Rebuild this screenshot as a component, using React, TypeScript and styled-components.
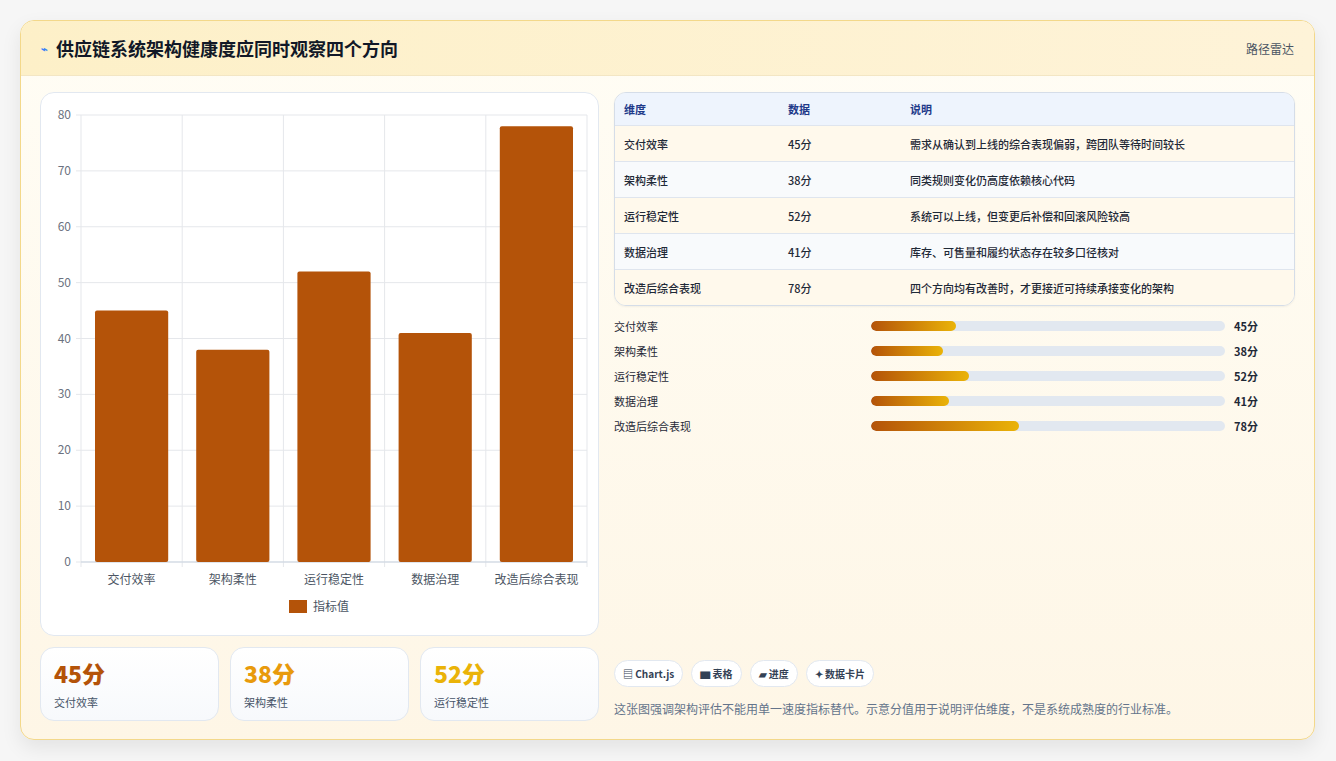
import React from "react";
import styled, { createGlobalStyle } from "styled-components";

const Global = createGlobalStyle`
  html, body { margin: 0; background: #f6f6f6; }
  body { font-family: "Noto Sans CJK SC", "Noto Sans", sans-serif; color: #1f2937; }
`;

const data = [
  { name: "交付效率", v: 45, desc: "需求从确认到上线的综合表现偏弱，跨团队等待时间较长" },
  { name: "架构柔性", v: 38, desc: "同类规则变化仍高度依赖核心代码" },
  { name: "运行稳定性", v: 52, desc: "系统可以上线，但变更后补偿和回滚风险较高" },
  { name: "数据治理", v: 41, desc: "库存、可售量和履约状态存在较多口径核对" },
  { name: "改造后综合表现", v: 78, desc: "四个方向均有改善时，才更接近可持续承接变化的架构" },
];

const Page = styled.div`padding: 20px 20px 20px 20px;`;
const Card = styled.div`
  width: 1295px; height: 720px; box-sizing: border-box;
  border: 1px solid #f3d88a; border-radius: 14px; overflow: hidden;
  background: linear-gradient(180deg, #fffdf5, #fef6e6);
  box-shadow: 0 8px 20px rgba(0,0,0,0.08);
  display: flex; flex-direction: column;
`;
const Header = styled.div`
  height: 56px; box-sizing: border-box; padding: 0 20px;
  display: flex; align-items: center; justify-content: space-between;
  background: linear-gradient(90deg, #fdf0c8, #fef3d8); border-bottom: 1px solid #f3e6c4;
`;
const Title = styled.div`font-size: 18px; font-weight: 700; color: #111827; display: flex; align-items: center; gap: 8px;`;
const Link = styled.div`font-size: 12px; color: #4b5563;`;
const Body = styled.div`flex: 1; display: grid; grid-template-columns: 559px 1fr; gap: 15px; padding: 16px 19px 18px 19px;`;
const Col = styled.div`display: flex; flex-direction: column; gap: 11px;`;
const ChartCard = styled.div`
  height: 544px; box-sizing: border-box; background: #fff; border: 1px solid #e2e8f0; border-radius: 14px;
`;
const Stats = styled.div`display: grid; grid-template-columns: repeat(3, 1fr); gap: 11px;`;
const Stat = styled.div`
  height: 74px; box-sizing: border-box; border: 1px solid #e2e8f0; border-radius: 14px;
  background: linear-gradient(180deg, #fff, #f7f9fc); padding: 10px 13px;
`;
const StatVal = styled.div<{ c: string }>`font-size: 23px; font-weight: 800; color: ${p => p.c}; line-height: 30px;`;
const StatLbl = styled.div`font-size: 11px; color: #475569; margin-top: 6px;`;
const Table = styled.div`border: 1px solid #d5dde8; border-radius: 12px; overflow: hidden; box-shadow: 0 1px 2px rgba(0,0,0,0.05);`;
const Row = styled.div<{ head?: boolean; alt?: boolean }>`
  display: grid; grid-template-columns: 164px 122px 1fr; padding: 0 9px;
  height: ${p => (p.head ? 32 : 35)}px; align-items: center; font-size: 11px;
  font-weight: ${p => (p.head ? 700 : 500)};
  color: ${p => (p.head ? "#1e3a8a" : "#1f2937")};
  background: ${p => (p.head ? "#eef4fd" : p.alt ? "#f8fafc" : "#fff9ec")};
  border-top: ${p => (p.head ? "none" : "1px solid #dfe5ee")};
`;
const Bars = styled.div`display: flex; flex-direction: column; gap: 9px; margin-top: 12px;`;
const BarRow = styled.div`display: grid; grid-template-columns: 257px 354px 1fr; gap: 0; align-items: center; font-size: 11px; height: 16px;`;
const Track = styled.div`height: 10px; background: #e2e8f0; border-radius: 5px; overflow: hidden;`;
const Fill = styled.div`height: 100%; border-radius: 5px; background: linear-gradient(90deg, #b45309, #eab308);`;
const Val = styled.div`font-weight: 700; padding-left: 9px;`;
const Spacer = styled.div`flex: 1;`;
const Chips = styled.div`display: flex; gap: 8px;`;
const Chip = styled.div`
  height: 27px; box-sizing: border-box; padding: 0 8px; border: 1px solid #e2e8f0; border-radius: 14px;
  background: #fff; font-size: 10px; font-weight: 600; color: #334155; display: flex; align-items: center; gap: 3px;
`;
const Note = styled.div`font-size: 12px; color: #64748b; margin-top: 13px; margin-bottom: 4px;`;

function Chart() {
  const x0 = 40, x1 = 546, y0 = 22, y1 = 469;
  const h = y1 - y0;
  const step = (x1 - x0) / 5;
  return (
    <svg width="557" height="542" style={{ display: "block" }} fontFamily="'Noto Sans CJK SC', sans-serif">
      {[0, 10, 20, 30, 40, 50, 60, 70, 80].map(t => {
        const y = y1 - (t / 80) * h;
        return (
          <g key={t}>
            <line x1={x0 - 5} x2={x1} y1={y} y2={y} stroke="#e5e7eb" />
            <text x={x0 - 10} y={y + 4} fontSize="12" fill="#6b7280" textAnchor="end">{t}</text>
          </g>
        );
      })}
      {[0, 1, 2, 3, 4, 5].map(i => (
        <line key={i} x1={x0 + i * step} x2={x0 + i * step} y1={y0} y2={y1 + 5} stroke="#e5e7eb" />
      ))}
      <line x1={x0} x2={x1} y1={y1} y2={y1} stroke="#cbd5e1" />
      {data.map((d, i) => {
        const bh = (d.v / 80) * h;
        return (
          <g key={d.name}>
            <rect x={x0 + i * step + 14} y={y1 - bh} width={step - 28} height={bh} rx="2" fill="#b45309" />
            <text x={x0 + i * step + step / 2} y={y1 + 22} fontSize="12" fill="#4b5563" textAnchor="middle">{d.name}</text>
          </g>
        );
      })}
      <rect x="248" y="507" width="18" height="13" fill="#b45309" />
      <text x="272" y="518" fontSize="12" fill="#4b5563">指标值</text>
    </svg>
  );
}

export default function App() {
  return (
    <Page>
      <Global />
      <Card>
        <Header>
          <Title><span style={{ color: "#3b82f6", fontSize: 11 }}>⌁</span>供应链系统架构健康度应同时观察四个方向</Title>
          <Link>路径雷达</Link>
        </Header>
        <Body>
          <Col>
            <ChartCard><Chart /></ChartCard>
            <Stats>
              <Stat><StatVal c="#b45309">45分</StatVal><StatLbl>交付效率</StatLbl></Stat>
              <Stat><StatVal c="#e89a0c">38分</StatVal><StatLbl>架构柔性</StatLbl></Stat>
              <Stat><StatVal c="#eab308">52分</StatVal><StatLbl>运行稳定性</StatLbl></Stat>
            </Stats>
          </Col>
          <Col style={{ gap: 0 }}>
            <Table>
              <Row head><span>维度</span><span>数据</span><span>说明</span></Row>
              {data.map((d, i) => (
                <Row key={d.name} alt={i % 2 === 1}><span>{d.name}</span><span>{d.v}分</span><span>{d.desc}</span></Row>
              ))}
            </Table>
            <Bars>
              {data.map(d => (
                <BarRow key={d.name}>
                  <span>{d.name}</span>
                  <Track><Fill style={{ width: `${(d.v / 187) * 100}%` }} /></Track>
                  <Val>{d.v}分</Val>
                </BarRow>
              ))}
            </Bars>
            <Spacer />
            <Chips>
              <Chip>▤ Chart.js</Chip>
              <Chip>▆ 表格</Chip>
              <Chip>▰ 进度</Chip>
              <Chip>✦ 数据卡片</Chip>
            </Chips>
            <Note>这张图强调架构评估不能用单一速度指标替代。示意分值用于说明评估维度，不是系统成熟度的行业标准。</Note>
          </Col>
        </Body>
      </Card>
    </Page>
  );
}
